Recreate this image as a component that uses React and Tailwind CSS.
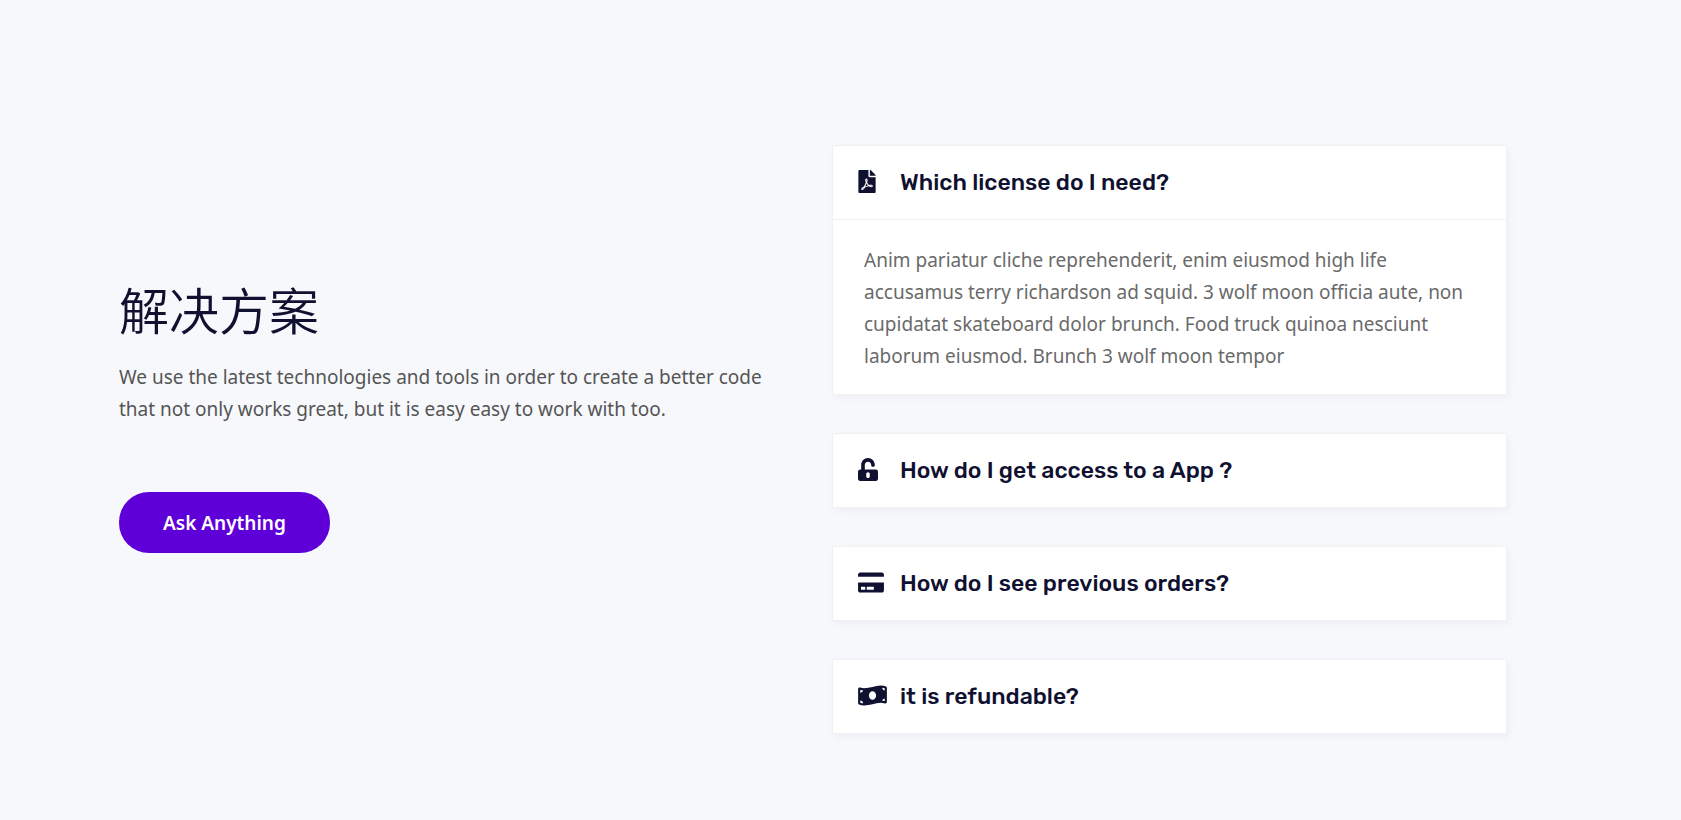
import { useState } from "react";
import { FaFilePdf, FaUnlockAlt, FaCreditCard, FaMoneyBillWave } from "react-icons/fa";

const questions = [
  {
    id: "license",
    title: "Which license do I need?",
    Icon: FaFilePdf,
    iconWidth: "w-[18px]",
    body: "Anim pariatur cliche reprehenderit, enim eiusmod high life accusamus terry richardson ad squid. 3 wolf moon officia aute, non cupidatat skateboard dolor brunch. Food truck quinoa nesciunt laborum eiusmod. Brunch 3 wolf moon tempor",
  },
  { id: "access", title: "How do I get access to a App ?", Icon: FaUnlockAlt, iconWidth: "w-[20px]" },
  { id: "orders", title: "How do I see previous orders?", Icon: FaCreditCard, iconWidth: "w-[26px]" },
  { id: "refund", title: "it is refundable?", Icon: FaMoneyBillWave, iconWidth: "w-[29px]" },
];

function Question({ item, open, onToggle }) {
  const { id, title, Icon, iconWidth, body } = item;
  return (
    <div className="border border-[#f1f1f2] bg-white shadow-[2px_3px_8px_rgba(20,20,50,0.04)]">
      <h3>
        <button
          type="button"
          aria-expanded={open}
          aria-controls={id}
          onClick={onToggle}
          className="flex h-[73px] w-full cursor-pointer items-center px-[25px] text-left font-[Rubik,Roboto,sans-serif] text-[23px] font-medium text-[#101030]"
        >
          <span className="flex w-[42px] shrink-0 pb-0.5">
            <Icon className={`h-[23px] ${iconWidth}`} aria-hidden="true" />
          </span>
          {title}
        </button>
      </h3>
      {open && body && (
        <div id={id} className="border-t border-[#f1f1f2] px-[31px] pt-6 pb-[22px] text-[19px] leading-8 text-[#6a6a6a]">
          {body}
        </div>
      )}
    </div>
  );
}

export default function App() {
  const [openId, setOpenId] = useState("license");
  return (
    <main className="min-h-screen bg-[#f7f8fc] font-['Segoe_UI','Noto_Sans','Noto_Sans_CJK_SC',sans-serif]">
      <section className="grid grid-cols-1 items-center gap-[38px] pt-[145px] pr-[174px] pb-[87px] pl-[119px] lg:grid-cols-2">
        <div className="pb-[46px]">
          <h2 className="mb-[26px] font-['Noto_Sans_CJK_SC',sans-serif] text-[50px] leading-[54px] font-[350] text-[#101030]">解决方案</h2>
          <p className="text-[19px] leading-8 text-[#555555]">
            We use the latest technologies and tools in order to create a better code that not only works great, but it is easy easy to work with too.
          </p>
          <button type="button" className="mt-[67px] h-[61px] cursor-pointer rounded-[30px] bg-[#5f00d9] px-11 pt-0.5 text-[19px] font-semibold text-white">
            Ask Anything
          </button>
        </div>
        <div className="flex flex-col gap-[38px]">
          {questions.map((item) => (
            <Question
              key={item.id}
              item={item}
              open={openId === item.id}
              onToggle={() => setOpenId(openId === item.id ? null : item.id)}
            />
          ))}
        </div>
      </section>
    </main>
  );
}
